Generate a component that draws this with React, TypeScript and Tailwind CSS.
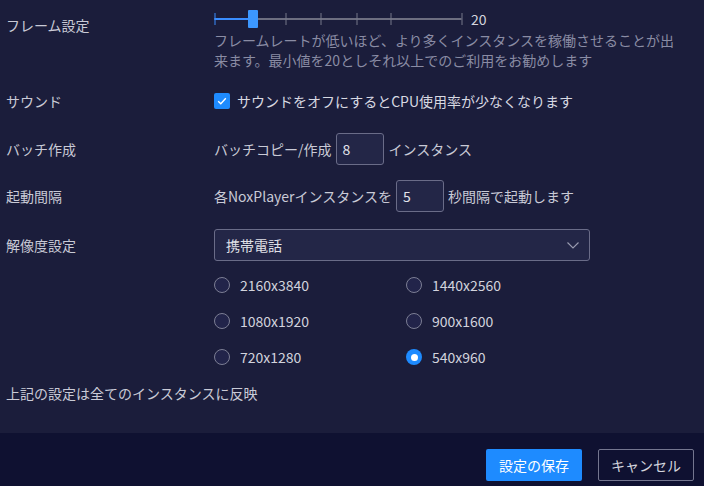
import React from "react";

const ticks = [0, 35, 71, 106, 142, 176, 247];

const FrameSlider = () => (
  <div className="flex items-center h-[20px]">
    <svg width="249" height="20" viewBox="0 0 249 20">
      <rect x="0.5" y="9" width="247" height="2" fill="#6d6e80" />
      <rect x="0.5" y="9" width="35" height="2" fill="#3a8dff" />
      {ticks.map((t) => (
        <rect key={t} x={t + 0.5} y="4" width="1" height="12" fill={t < 35 ? "#3a8dff" : "#77788a"} />
      ))}
      <rect x="34" y="1" width="10" height="18" rx="1" fill="#3c97ff" />
    </svg>
    <span className="ml-[8px] text-[14px] text-[#d4d5de] leading-none">20</span>
  </div>
);

const Radio = ({ label, checked }: { label: string; checked?: boolean }) => (
  <div className="flex items-center h-[36px] w-[192px]">
    {checked ? (
      <span className="w-[16px] h-[16px] rounded-full bg-[#1e8bff] flex items-center justify-center">
        <span className="w-[7px] h-[7px] rounded-full bg-white" />
      </span>
    ) : (
      <span className="w-[16px] h-[16px] rounded-full border border-[#7c7e94] bg-[#22244a]" />
    )}
    <span className="ml-[10px] text-[14px] text-[#d2d3dd]">{label}</span>
  </div>
);

const NumBox = ({ value }: { value: string }) => (
  <div className="w-[48px] h-[32px] border border-[#6a6c88] rounded-[3px] bg-[#232647] flex items-center px-[6px] text-[14px] text-[#e2e3ea]">
    {value}
  </div>
);

export default function App() {
  return (
    <div className="w-[704px] h-[486px] flex flex-col bg-[#1b1d3b] font-['Noto_Sans_CJK_JP','Noto_Sans',sans-serif] text-[14px] leading-[20px] text-[#c9cad6] overflow-hidden">
      <div className="flex-1 flex flex-col">
        {/* Frame rate */}
        <div className="flex">
          <div className="w-[214px] pl-[6px] mt-[15px]">フレーム設定</div>
          <div className="flex flex-col mt-[9px]">
            <FrameSlider />
            <p className="mt-[1px] w-[470px] text-[#8a8ca4]">
              フレームレートが低いほど、より多くインスタンスを稼働させることが出来ます。最小値を20としそれ以上でのご利用をお勧めします
            </p>
          </div>
        </div>

        {/* Sound */}
        <div className="flex items-center h-[32px] mt-[15px]">
          <div className="w-[214px] pl-[6px]">サウンド</div>
          <span className="w-[16px] h-[16px] rounded-[2px] bg-[#1e8bff] flex items-center justify-center">
            <svg width="12" height="12" viewBox="0 0 12 12" fill="none">
              <path d="M2.2 6.2 L4.8 8.7 L9.8 3.3" stroke="white" strokeWidth="1.4" />
            </svg>
          </span>
          <span className="ml-[7px] text-[#d8d9e2]">サウンドをオフにするとCPU使用率が少なくなります</span>
        </div>

        {/* Batch */}
        <div className="flex items-center h-[32px] mt-[16px]">
          <div className="w-[214px] pl-[6px]">バッチ作成</div>
          <span>バッチコピー/作成</span>
          <div className="ml-[4px] mr-[5px]">
            <NumBox value="8" />
          </div>
          <span>インスタンス</span>
        </div>

        {/* Interval */}
        <div className="flex items-center h-[32px] mt-[15px]">
          <div className="w-[214px] pl-[6px]">起動間隔</div>
          <span>各NoxPlayerインスタンスを</span>
          <div className="ml-[4px] mr-[4px]">
            <NumBox value="5" />
          </div>
          <span>秒間隔で起動します</span>
        </div>

        {/* Resolution */}
        <div className="flex items-center h-[32px] mt-[17px]">
          <div className="w-[214px] pl-[6px]">解像度設定</div>
          <div className="w-[376px] h-[32px] border border-[#6a6c88] rounded-[3px] bg-[#232647] flex items-center justify-between pl-[11px] pr-[9px] text-[#e0e1e8]">
            <span>携帯電話</span>
            <svg width="14" height="14" viewBox="0 0 14 14" fill="none">
              <path d="M1.5 4.5 L7 10 L12.5 4.5" stroke="#9a9cb0" strokeWidth="1.1" />
            </svg>
          </div>
        </div>

        <div className="mt-[6px] pl-[214px] grid grid-cols-[192px_192px]">
          <Radio label="2160x3840" />
          <Radio label="1440x2560" />
          <Radio label="1080x1920" />
          <Radio label="900x1600" />
          <Radio label="720x1280" />
          <Radio label="540x960" checked />
        </div>

        <div className="mt-[8px] pl-[6px]">上記の設定は全てのインスタンスに反映</div>
      </div>

      {/* Footer */}
      <div className="h-[53px] bg-[#0f1131] flex items-start justify-end pt-[16px] pr-[10px] gap-[16px]">
        <button className="w-[96px] h-[32px] rounded-[2px] bg-[#1e8bff] text-white text-[14px]">設定の保存</button>
        <button className="w-[96px] h-[32px] rounded-[2px] border border-[#74768f] text-[#d4d5de] text-[14px]">キャンセル</button>
      </div>
    </div>
  );
}
